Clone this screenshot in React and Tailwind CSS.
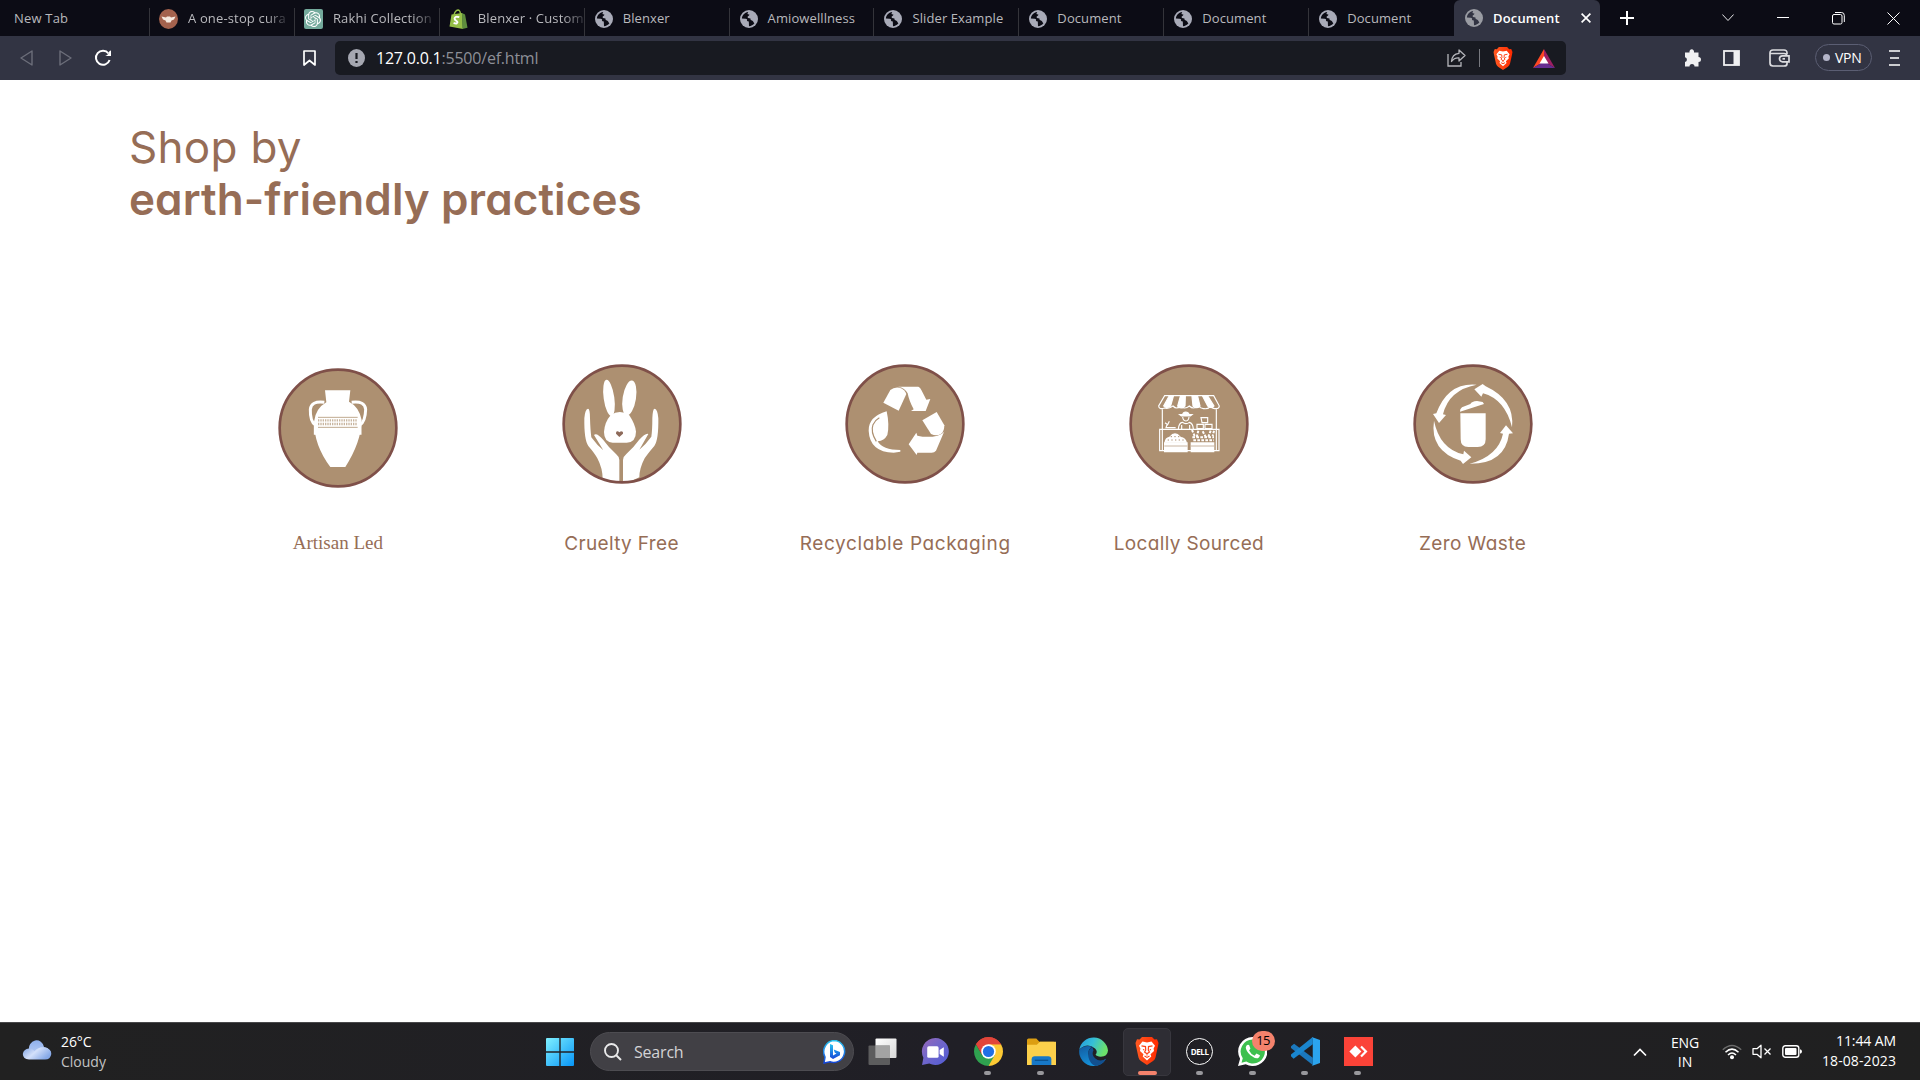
import React from "react";
import { SiOpenai } from "react-icons/si";

const Globe = ({ dim }) => (
  <svg className="h-[18px] w-[18px] shrink-0" viewBox="0 0 18 18">
    <circle cx="9" cy="9" r="9" fill={dim ? "#9a9ca3" : "#a9abb8"} />
    <path
      d="M8.2 2C4.6 2.400 2 5.400 1.900 8.600L5.600 8.700C7.200 8.900 7.500 10 6.900 11L8.800 11.400L9 16.200C11.200 16 13 15 14.400 13.200C13.600 12.600 13.300 11.400 12.400 10.700C10.700 10.400 10.200 9.700 10.500 8.600L8 8C7.300 7.300 7.600 6.400 8.500 6.100L9.600 4.700L7.400 3.900Z"
      fill={dim ? "#323443" : "#0c0c15"}
    />
    <path d="M10.500 2.300L11.800 4.300L10.800 6.600L12.200 7.700L15.900 7.800C15.500 5.200 13.500 2.900 10.500 2.300Z" fill={dim ? "#9a9ca3" : "#a9abb8"} />
  </svg>
);

const LionShield = ({ className, id }) => (
  <svg className={className} viewBox="0 0 24 28">
    <defs>
      <linearGradient id={id} x1="0" x2="1">
        <stop offset="0" stopColor="#ff5a22" />
        <stop offset="1" stopColor="#ff2a00" />
      </linearGradient>
    </defs>
    <path d="M7 0H17L19.500 2.600L22 2.300L23.500 6L23 9L20.500 20.500Q20 22.500 18 24L12 28L6 24Q4 22.500 3.500 20.500L1 9L.5 6L2 2.300L4.500 2.600Z" fill={`url(#${id})`} />
    <path d="M7.500 4.500L12 5.500L16.500 4.500L20 8.700L18.600 11.500L19 14L15.500 17.300L16.300 19.500L12 23.500L7.700 19.500L8.500 17.300L5 14L5.400 11.500L4 8.700Z" fill="#fff" />
    <path d="M6.500 8.800L10.500 9.600L10.700 13L9.600 15L12 16.700L14.400 15L13.300 13L13.500 9.600L17.500 8.800M8 12.500L9.300 13M16 12.500L14.700 13M12 16.700V18.500M9.500 19L12 20.400L14.500 19" fill="none" stroke="#ff4418" strokeWidth="1.200" />
  </svg>
);

const TABS = [
  ["A one-stop cura", "one"],
  ["Rakhi Collection", "ai"],
  ["Blenxer · Custom", "shop"],
  ["Blenxer"],
  ["Amiowelllness"],
  ["Slider Example"],
  ["Document"],
  ["Document"],
  ["Document"],
];

function Favicon({ kind }) {
  if (kind === "one")
    return (
      <svg className="h-5 w-[19px] shrink-0" viewBox="0 0 19 20">
        <ellipse cx="9.500" cy="10" rx="9.500" ry="10" fill="#a4624d" />
        <path d="M2.500 7.500L7 8.500L8 7.500H11L12 8.500L16.500 7.500L15 10.500L12.500 11.500L11.500 13.500H7.500L6.500 11.500L4 10.500Z" fill="#f6e9df" />
      </svg>
    );
  if (kind === "ai")
    return (
      <div className="flex h-5 w-[19px] shrink-0 items-center justify-center rounded-[2px] bg-[#74aa9c] text-white">
        <SiOpenai size={16} />
      </div>
    );
  if (kind === "shop")
    return (
      <svg className="h-5 w-[19px] shrink-0" viewBox="0 0 19 20">
        <path d="M2.500 5.500L13 4L14 20L.5 17.500Z" fill="#95bf47" />
        <path d="M13 4L16 5.500L18.500 18.800L13.300 20Z" fill="#5e8e3e" />
        <path d="M5 6Q6 1.500 9 1Q11 1 11.500 5" fill="none" stroke="#95bf47" strokeWidth="1.300" />
        <path d="M10.300 8.200Q5.800 6.800 5.600 9.600Q5.700 11 7.500 12Q9.300 13.300 7.800 14.300Q6.800 14.800 4.600 13.800" fill="none" stroke="#fff" strokeWidth="1.900" />
      </svg>
    );
  return <Globe />;
}

function TabStrip() {
  return (
    <div className="flex h-9 bg-[#0c0c15] text-[13px] text-[#b9b9bd]">
      <div className="flex w-[150px] shrink-0 flex-col justify-end">
        <div className="flex h-7 items-center border-r border-[#34343a] pb-[7px] pl-[14px] tracking-[0.2px]">New Tab</div>
      </div>
      {TABS.map(([title, kind], i) => (
        <div key={i} className="flex w-[144.9px] shrink-0 flex-col justify-end">
          <div className={`flex h-7 items-center pb-[7px] ${kind ? "gap-[10px] pl-[9px]" : "gap-[10px] pl-[10px]"} ${i < 8 ? "border-r border-[#34343a]" : ""}`}>
            <Favicon kind={kind} />
            <span
              className={`whitespace-nowrap ${
                kind ? "tracking-[0.15px] [mask-image:linear-gradient(to_right,black_80%,#0003)]" : "tracking-[0.1px]"
              }`}
            >
              {title}
            </span>
          </div>
        </div>
      ))}
      <div className="flex w-[146px] shrink-0 items-center rounded-t-md bg-[#323443] pl-[11px] font-semibold text-white">
        <Globe dim />
        <span className="ml-[9px] w-[89px] pl-px pt-px tracking-[0.15px]">Document</span>
        <svg className="h-[10px] w-[10px]" viewBox="0 0 10 10" stroke="#fff" strokeWidth="1.700">
          <path d="M.6.6L9.400 9.400M9.400.6L.6 9.400" />
        </svg>
      </div>
      <div className="flex flex-1 items-center">
        <svg className="ml-[20px] h-[14px] w-[14px]" viewBox="0 0 14 14" stroke="#fff" strokeWidth="2">
          <path d="M7 0V14M0 7H14" />
        </svg>
        <svg className="ml-[88px] h-[14px] w-[12px]" viewBox="0 0 12 14" stroke="#e8e8ea" fill="none">
          <path d="M.4 3.500L6 9.500L11.600 3.500" />
        </svg>
        <svg className="ml-[43px] h-[14px] w-[12px]" viewBox="0 0 12 14" stroke="#fff">
          <path d="M0 6.500H12" />
        </svg>
        <svg className="ml-[43px] h-[13px] w-[13px]" viewBox="0 0 13 13" stroke="#fff" fill="none">
          <rect x=".5" y="2.500" width="9.500" height="9.500" rx="1.500" />
          <path d="M3 .5H9.500Q12.300.5 12.300 3.500V10" />
        </svg>
        <svg className="ml-[42px] h-[13px] w-[13px]" viewBox="0 0 13 13" stroke="#fff">
          <path d="M.5.5L12.500 12.500M12.500.5L.5 12.500" />
        </svg>
      </div>
    </div>
  );
}

function Toolbar() {
  return (
    <div className="flex h-11 items-center bg-[#323443] pb-1">
      <svg className="ml-5 mt-1 h-4 w-[13px]" viewBox="0 0 13 16" fill="none" stroke="#6c6e7a" strokeWidth="1.400" strokeLinejoin="round">
        <path d="M12 1V15L1 8Z" />
      </svg>
      <svg className="ml-[26px] mt-1 h-4 w-[13px]" viewBox="0 0 13 16" fill="none" stroke="#6c6e7a" strokeWidth="1.400" strokeLinejoin="round">
        <path d="M1 1V15L12 8Z" />
      </svg>
      <svg className="ml-[22px] mt-1 h-[18px] w-[18px]" viewBox="0 0 18 18" fill="none" stroke="#fff" strokeWidth="2">
        <path d="M14.500 4.500A7 7 0 1 0 15.600 11" />
        <path d="M17 1.500V7H11.200Q14.500 6 15.500 2Z" fill="#fff" stroke="none" />
      </svg>
      <svg className="ml-[191px] mt-1 h-4 w-[13px]" viewBox="0 0 13 16" fill="none" stroke="#fff" strokeWidth="1.700" strokeLinejoin="round">
        <path d="M1 1H12V15L6.500 10.500L1 15Z" />
      </svg>
      <div className="ml-[19px] mt-1 flex h-[34px] w-[1231px] items-center rounded-[5px] bg-[#181a21] pl-[13px]">
        <svg className="h-[18px] w-[17px]" viewBox="0 0 17 18">
          <ellipse cx="8.500" cy="9" rx="8.500" ry="9" fill="#a5a7b1" />
          <path d="M8.500 4V10M8.500 12V14" stroke="#181a21" strokeWidth="2.200" />
        </svg>
        <span className="ml-[11px] w-[1071px] text-base tracking-[-0.22px] text-[#8d8f97]">
          <span className="text-white">127.0.0.1</span>:5500/ef.html
        </span>
        <svg className="h-[18px] w-[19px]" viewBox="0 0 19 18" fill="none" stroke="#b4b5ba" strokeWidth="1.300">
          <path d="M1 5V17H14V13" />
          <path d="M12 1L18 6.500L12 12V8.800Q7 8.500 4.500 12.500Q5 5 12 4.300Z" strokeLinejoin="round" />
        </svg>
        <div className="ml-[13px] h-[18px] w-px bg-[#77797f]" />
        <LionShield className="ml-[13px] h-[23px] w-5" id="shieldSmall" />
        <svg className="ml-[20px] h-[19px] w-[22px]" viewBox="0 0 22 19">
          <path d="M11 0L0 19L11 12.500Z" fill="#ff4724" />
          <path d="M11 0L22 19L11 12.500Z" fill="#9e1f63" />
          <path d="M0 19H22L11 12.500Z" fill="#662d91" />
          <path d="M11 7L15.500 14.500H6.500Z" fill="#fff" />
        </svg>
      </div>
      <svg className="ml-[118px] mt-1 h-[18px] w-[18px]" viewBox="0 0 18 18" fill="#f0f0f2">
        <path d="M1 3.500H5.500A2.300 2.600 0 1 1 10 3.500H14.500V8A2.300 2.300 0 1 1 14.500 13V17.500H10.500A2.500 2.500 0 0 0 5.500 17.500H1V13A2.400 2.400 0 0 0 1 8.300Z" />
      </svg>
      <svg className="ml-[21px] mt-1 h-4 w-[17px]" viewBox="0 0 17 16">
        <rect x="1" y="1" width="15" height="14" fill="none" stroke="#f0f0f2" strokeWidth="1.800" />
        <path d="M10.500 1H16V15H10.500Z" fill="#f0f0f2" />
      </svg>
      <svg className="ml-[29px] mt-1 h-[18px] w-[21px]" viewBox="0 0 21 18" fill="none" stroke="#dcdce0" strokeWidth="1.700">
        <path d="M18 5V4Q18 1 15 1H4Q1 1 1 4V14Q1 17 4 17H15Q18 17 18 15V13M1 4.500H15Q18 4.500 18 7" />
        <path d="M20 6.800H13.500A3 3 0 0 0 13.500 12.800H20Z" />
        <path d="M13.500 9.800H16" />
      </svg>
      <div className="ml-[25px] mt-[2px] flex h-[27px] w-[57px] items-center gap-[5px] rounded-full border border-[#5b5e73] pl-[7px] text-[14px] text-white">
        <i className="h-[7px] w-[7px] rounded-full bg-[#b4b5c9]" />
        <span className="tracking-[-0.3px]">VPN</span>
      </div>
      <svg className="ml-[17px] mt-1 h-4 w-[11px]" viewBox="0 0 11 16" stroke="#fff" strokeWidth="1.600">
        <path d="M0 1H11M1 8H10M0 15H11" />
      </svg>
    </div>
  );
}

const RIM = "#7f5049";
const TAN = "#ad9071";

const Vase = () => (
  <g fill="#fff">
    <path d="M196 121H272L268 155Q298 170 306 210Q305 275 257 351H212Q163 285 163 215Q168 175 200 157Z" />
    <path d="M194 157Q154 152 152 178Q151 215 167 225V254M276 157Q316 152 318 178Q317 215 301 225V254" fill="none" stroke="#fff" strokeWidth="9" />
    <path d="M175 202H294M175 232H294" stroke="#c0aa90" strokeWidth="3" />
    <path d="M175 211H294M175 222H294" stroke="#c8b59f" strokeWidth="7" strokeDasharray="4 3" />
  </g>
);

const Rabbit = () => (
  <g fill="#fff">
    <ellipse cx="1047" cy="144" rx="16" ry="55" transform="rotate(-8 1047 144)" />
    <ellipse cx="1108" cy="144" rx="20" ry="53" transform="rotate(9 1108 144)" />
    <path d="M1052 196Q1079 176 1108 196Q1126 224 1128 245Q1128 277 1100 278H1058Q1032 276 1032 246Q1034 216 1052 196Z" />
    <path d="M1078 261L1068 251Q1067 243 1074 244L1078 247L1083 244Q1090 244 1089 251Z" fill="#8d6a5a" />
    <path d="M984 176Q975 178 973 205Q972 270 985 288Q1004 310 1012 325Q1028 355 1028 388L1052 395L1078 396V330Q1078 320 1068 312Q1044 290 1030 270Q1010 247 1002 255L1030 301Q1012 287 994 262Q991 240 990 205Q990 176 984 176Z" />
    <path d="M1184 176Q1193 178 1195 205Q1196 270 1183 288Q1164 310 1154 325Q1138 355 1138 382L1115 392L1089 396V330Q1089 320 1099 312Q1123 290 1137 270Q1158 247 1165 252L1138 299Q1156 285 1174 260Q1177 240 1177 205Q1178 176 1184 176Z" />
  </g>
);

const Recycle = () => (
  <g fill="#fff">
    <path d="M311 158L332 120Q343 110 360 113Q376 118 380 132L357 182Z" />
    <path d="M355 110H416Q422 112 425 120L440 149L452 147L438 183H394L402 178Q388 152 384 130Q376 113 355 110Z" />
    <path d="M428 211L471 186L494 226Q494 244 484 252Q470 260 454 252Z" />
    <path d="M494 244L469 302Q464 308 456 308H413L411 315L387 283L410 248L413 257Q445 264 473 257Q490 252 494 244Z" />
    <path d="M321 184Q266 200 267 242Q270 306 342 308L362 305V300Q308 300 294 274Q314 272 323 255Q330 225 321 184Z" />
    <path d="M290 274Q272 246 280 224Q286 210 299 203" fill="none" stroke={TAN} strokeWidth="3.500" />
  </g>
);

const Market = () => (
  <g fill="none" stroke="#fff" strokeWidth="3.500">
    <path d="M1154 137H1301L1318 168Q1317 177 1306 176Q1297 177 1293 168Q1284 178 1272 176Q1262 177 1256 168Q1240 180 1228 168Q1214 180 1201 168Q1190 180 1179 168Q1165 178 1154 174Q1137 180 1136 168Z" />
    <path d="M1167 139L1151 168Q1158 177 1172 168L1180 139ZM1201 139L1193 168Q1205 180 1215 168L1216 139ZM1236 139L1239 168Q1250 178 1260 168L1253 139ZM1268 139L1283 168Q1295 178 1302 168L1284 139Z" fill="#fff" />
    <path d="M1147 178V238M1309 178V238M1139 238H1317V302H1139ZM1147 240V300M1309 240V300" />
    <path d="M1199 194H1236L1231 198H1204ZM1208 193Q1210 186 1217 186Q1225 186 1227 193Z" fill="#fff" />
    <path d="M1208 201Q1209 212 1218 213Q1226 212 1227 201M1195 237Q1197 218 1207 217Q1218 225 1228 217Q1239 220 1240 237M1205 225V237M1229 225V237" />
    <path d="M1155 218L1163 224L1168 214M1162 222L1158 233H1187M1263 203H1283V218H1266ZM1251 223H1270V236H1251ZM1275 223H1296V236H1275Z" />
    <path d="M1236 240L1244 258M1255 242L1250 262M1268 244L1278 262M1292 242L1284 264M1302 242L1298 258M1237 262H1302M1240 271H1302" strokeDasharray="8 4" strokeWidth="6" />
    <path d="M1153 278Q1155 262 1168 260Q1185 240 1202 260Q1218 263 1221 278Z" fill="#fff" stroke="none" />
    <path d="M1163 270H1215M1172 260H1206" stroke={TAN} strokeWidth="3" strokeDasharray="4 7" />
    <path d="M1152 277H1223V307H1152ZM1232 277H1303V307H1232Z" fill="#fff" stroke="none" />
    <path d="M1153 288H1222M1233 288H1302" stroke={TAN} strokeWidth="2" />
  </g>
);

const Bin = () => (
  <g fill="#fff">
    <path d="M242 190H318V268Q318 291 294 291H266Q243 291 243 268Z" />
    <path d="M241 185Q240 177 247 172L272 162Q276 154 292 153L309 156L313 162Z" />
    <path d="M291 104Q205 96 170 190L160 192L178 219L199 195L190 193Q207 120 291 104Z" />
    <path d="M397 232Q406 150 318 109L309 102L284 118L305 140L310 130Q376 148 397 232Z" />
    <path d="M270 341Q376 342 388 251L400 250L379 226L361 249L370 251Q356 318 270 341Z" />
    <path d="M163 212Q150 302 243 332L250 342L275 322L253 302L251 313Q180 296 163 212Z" />
  </g>
);

const PRACTICES = [
  { label: "Artisan Led", box: "55 54 360 360", art: Vase, circle: "mt-1", text: "mt-[41px] font-['Liberation_Serif']" },
  { label: "Cruelty Free", box: "906 42 360 360", art: Rabbit, circle: "mb-1", text: "mt-[42px] tracking-[0.35px]" },
  { label: "Recyclable Packaging", box: "196 42 360 360", art: Recycle, circle: "mb-1", text: "mt-[42px] tracking-[0.6px]" },
  { label: "Locally Sourced", box: "1047 42 360 360", art: Market, circle: "mb-1", text: "mt-[42px] tracking-[0.35px]" },
  { label: "Zero Waste", box: "100 42 360 360", art: Bin, circle: "mb-1", text: "mt-[42px] tracking-[0.4px]" },
];

function Page() {
  return (
    <main className="h-[942px] bg-white pl-[129px] pt-[41px] font-['Inter',sans-serif] text-[#966d56] [font-feature-settings:'cv11']">
      <h1 className="text-[44px] leading-[52px]">
        <span className="block font-normal tracking-[0.3px]">Shop by</span>
        <span className="block font-semibold tracking-[0.1px]">earth-friendly practices</span>
      </h1>
      <div className="ml-[67px] mt-[139px] flex w-[1419px]">
        {PRACTICES.map(({ label, box, art: Art, circle, text }) => {
          const [x, y] = box.split(" ").map(Number);
          return (
            <div key={label} className="flex w-[283.7px] shrink-0 flex-col items-center">
              <svg className={`h-[120px] w-[120px] ${circle}`} viewBox={box}>
                <circle cx={x + 180} cy={y + 180} r="175" fill={TAN} />
                <Art />
                <circle cx={x + 180} cy={y + 180} r="175" fill="none" stroke={RIM} strokeWidth="8" />
              </svg>
              <p className={`whitespace-nowrap text-[19px] leading-7 ${text}`}>{label}</p>
            </div>
          );
        })}
      </div>
    </main>
  );
}

const AppIcon = ({ children }) => (
  <svg className="h-[29px] w-[29px]" viewBox="0 0 28 28">
    {children}
  </svg>
);

function Slot({ children, running, active }) {
  return (
    <div className={`relative mx-[2.450px] flex h-12 w-12 items-center justify-center rounded-[5px] ${active ? "border border-[#38373e] bg-[#2e2d34]" : ""}`}>
      {children}
      {running && <i className="absolute bottom-[1px] left-[20px] h-1 w-[7px] rounded-full bg-[#98989c]" />}
      {active && <i className="absolute bottom-0 left-[14px] h-1 w-[19px] rounded-full bg-[#f4826c]" />}
    </div>
  );
}

function Taskbar() {
  return (
    <footer className="flex h-[58px] items-center border-t border-[#48484a] bg-linear-to-r from-[#212121] via-[#201f26] to-[#202020] text-white">
      <svg className="ml-[22px] mb-1 h-5 w-[30px]" viewBox="0 0 30 20">
        <defs>
          <linearGradient id="cloudBack" x2="0" y2="1">
            <stop stopColor="#8fb0ec" />
            <stop offset="1" stopColor="#c3d4f6" />
          </linearGradient>
          <linearGradient id="cloudFront" x2="1" y2=".5">
            <stop stopColor="#7ea2e2" />
            <stop offset=".5" stopColor="#d3e0fa" />
            <stop offset="1" stopColor="#86a9e8" />
          </linearGradient>
        </defs>
        <path d="M7 10A7.500 8 0 0 1 22 7A6.500 6.300 0 0 1 24 19H12Z" fill="url(#cloudBack)" />
        <path d="M7 8.500Q10.500 8.500 12.500 11Q17 6.500 22.500 7.500Q29.500 8.500 29.300 14Q28.500 19.500 23 19.600H7Q1 19 .8 14Q1.500 9 7 8.500Z" fill="url(#cloudFront)" />
      </svg>
      <div className="ml-[9px] w-[485px] text-[14px] leading-5">
        <div className="tracking-[-0.1px]">26°C</div>
        <div className="text-[#c3c3c3]">Cloudy</div>
      </div>
      <svg className="h-7 w-7" viewBox="0 0 28 28">
        <defs>
          <linearGradient id="win" x2="1" y2="1">
            <stop stopColor="#7ff0ff" />
            <stop offset="1" stopColor="#0795f7" />
          </linearGradient>
        </defs>
        <path d="M0 1Q0 0 1 0H13.300V13.300H0ZM14.700 0H27Q28 0 28 1V13.300H14.700ZM0 14.700H13.300V28H1Q0 28 0 27ZM14.700 14.700H28V27Q28 28 27 28H14.700Z" fill="url(#win)" />
      </svg>
      <div className="ml-4 flex h-[39px] w-[264px] items-center rounded-full border border-[#4d4c51] bg-[#414045] pl-[13px]">
        <svg className="h-[18px] w-[18px]" viewBox="0 0 18 18" fill="none" stroke="#e9e9ea" strokeWidth="1.900">
          <circle cx="7.500" cy="7.500" r="6.500" />
          <path d="M12 12L17 17" />
        </svg>
        <span className="ml-[12px] w-[189px] text-base tracking-[-0.2px] text-[#d3d3d5]">Search</span>
        <svg className="h-6 w-6" viewBox="0 0 24 24">
          <defs>
            <linearGradient id="bing" x2="0" y2="1">
              <stop stopColor="#27c3f0" />
              <stop offset="1" stopColor="#1546d8" />
            </linearGradient>
          </defs>
          <path d="M12 .5A11 11 0 1 1 7 21.800L1 23L2 17A11.300 11.300 0 0 1 12 .5Z" fill="#fff" stroke="url(#bing)" strokeWidth="1.500" />
          <path d="M7 4L10 5.200V15.500L13.500 13.600L11.800 12.800L10.700 9.500L17 12V15.300L10 19L7 17Z" fill="url(#bing)" />
        </svg>
      </div>
      <div className="ml-[2px] flex w-[529px] items-center">
        <Slot>
          <svg className="h-7 w-[29px]" viewBox="0 0 29 28">
            <defs>
              <linearGradient id="tv" x2="1" y2="1">
                <stop stopColor="#fff" />
                <stop offset="1" stopColor="#d8d8d8" />
              </linearGradient>
            </defs>
            <rect x="7.500" y=".5" width="21" height="19.500" rx="1" fill="url(#tv)" />
            <rect x=".5" y="7.500" width="21.500" height="19.500" rx="1" fill="#6c6c6c" opacity=".8" />
            <path d="M7.500 7.500H22V20H7.500Z" fill="#a3a3a3" />
          </svg>
        </Slot>
        <Slot>
          <AppIcon>
            <defs>
              <linearGradient id="chat" x2="1" y2="1">
                <stop stopColor="#9a68b8" />
                <stop offset=".4" stopColor="#7467c9" />
                <stop offset="1" stopColor="#4f5bd5" />
              </linearGradient>
            </defs>
            <path d="M14 1A13 13 0 1 1 8 25.600L1 27L2.300 20A13 13 0 0 1 14 1Z" fill="url(#chat)" />
            <rect x="6" y="9" width="11" height="11" rx="1.500" fill="#fff" />
            <path d="M18 12.500L22 10V19L18 16.500Z" fill="#fff" />
          </AppIcon>
        </Slot>
        <Slot running>
          <AppIcon>
            <path d="M14 14L1.880 7A14 14 0 0 1 26.120 7Z" fill="#e1453a" />
            <path d="M14 14V28A14 14 0 0 0 26.120 7H14Z" fill="#fcc934" />
            <path d="M14 14L20 17.500L14 28A14 14 0 0 1 1.880 7L8 17.500Z" fill="#2fa14f" />
            <path d="M14 7H26.120A14 14 0 0 0 1.880 7L8 17.500Z" fill="#e1453a" />
            <circle cx="14" cy="14" r="7" fill="#fff" />
            <circle cx="14" cy="14" r="5.400" fill="#1f6fe5" />
          </AppIcon>
        </Slot>
        <Slot running>
          <AppIcon>
            <path d="M0 3Q0 1.500 1.500 1.500H9L12 4.500H26V12H0Z" fill="#dc9e12" />
            <path d="M0 7.500H9.500L12.500 4.500H28V27H0Z" fill="#fcd04b" />
            <path d="M4.500 27V21.500Q4.500 18.500 7.500 18.500H20.500Q23.500 18.500 23.500 21.500V27Z" fill="#1778c8" />
            <path d="M7.500 22.500H20.500" stroke="#0c5492" strokeWidth="1.300" />
          </AppIcon>
        </Slot>
        <Slot>
          <AppIcon>
            <defs>
              <linearGradient id="edgeTop" x2="1" y2=".3">
                <stop stopColor="#2399dc" />
                <stop offset=".5" stopColor="#35bfd8" />
                <stop offset="1" stopColor="#6be16b" />
              </linearGradient>
              <linearGradient id="edgeLow" x2=".5" y2="1">
                <stop stopColor="#135a9f" />
                <stop offset="1" stopColor="#1595dd" />
              </linearGradient>
            </defs>
            <path d="M.3 12A14 14 0 0 1 28 13Q27.500 19 21 19Q17 19 16 17Q18.500 14 15.500 11Q8 5 .3 12Z" fill="url(#edgeTop)" />
            <path d="M.3 12Q6 7 13 9.500Q9 11 9 16Q10 24 18 24Q23 24 26 21Q22 28 14 28A14 14 0 0 1 .3 12Z" fill="url(#edgeLow)" />
            <path d="M13 9.700Q8 12 9 19Q10.500 26 16 27.900Q22.500 27.500 26.300 21Q20 24.500 15.500 20.500Q11.500 17 14 12.800Z" fill="#12508f" />
          </AppIcon>
        </Slot>
        <Slot active>
          <LionShield className="mb-px h-7 w-6" id="shieldLarge" />
        </Slot>
        <Slot running>
          <div className="flex h-[27px] w-[27px] items-center justify-center rounded-full border-[1.500px] border-white text-[8px] font-bold leading-none tracking-[-0.4px]">
            DELL
          </div>
        </Slot>
        <Slot running>
          <AppIcon>
            <path d="M14 0A14 14 0 1 1 7.500 26.200L0 28L2 21A14 14 0 0 1 14 0Z" fill="#fff" />
            <path d="M14 2.400A11.600 11.600 0 1 1 8 23.700L3.400 24.800L4.600 20.500A11.600 11.600 0 0 1 14 2.400Z" fill="#3dc04e" />
            <path d="M9.500 7.500Q8 7.500 7.500 10Q7.500 13.500 12 17.700Q16.500 21.200 19.200 20.500Q21 19.800 21.200 17.700L17.800 16L16 18Q12.500 16.800 10.700 13L12 11L10.700 7.700Z" fill="#fff" />
          </AppIcon>
          <span className="absolute top-[3px] left-[23px] flex h-[20px] w-[23px] items-center justify-center rounded-full bg-[#f4826c] text-[13px] tracking-[-0.5px] text-black">15</span>
        </Slot>
        <Slot running>
          <AppIcon>
            <path d="M0 9L3 6.500L21 20V27L0 10.500Z" fill="#1b78bd" />
            <path d="M0 18.500L2.500 21L21 7V0L0 17Z" fill="#1a86cf" />
            <path d="M20 0L28 3V25L20 28Q21 27.500 21 26V2Q21 .5 20 0Z" fill="#2ba4ee" />
          </AppIcon>
        </Slot>
        <Slot running>
          <AppIcon>
            <path d="M0 0H28V28H0Z" fill="#fb4338" />
            <path d="M11 8.200L16.800 14L11 19.800L5.200 14Z" fill="#fff" />
            <path d="M15.700 10L17.200 8.500L22.700 14L17.200 19.500L15.700 18L19.700 14Z" fill="#fff" />
          </AppIcon>
        </Slot>
      </div>
      <svg className="ml-[248px] h-[10px] w-[14px]" viewBox="0 0 14 10" fill="none" stroke="#fff" strokeWidth="1.700">
        <path d="M1 8.500L7 2.500L13 8.500" />
      </svg>
      <div className="ml-[20px] w-[36px] text-center text-[14px] leading-[19px]">
        <div className="tracking-[-0.1px]">ENG</div>
        <div>IN</div>
      </div>
      <svg className="ml-[19px] h-4 w-5" viewBox="0 0 20 16" fill="none" stroke="#fff" strokeWidth="1.500">
        <path d="M.8 5.800Q10-2.800 19.200 5.800" stroke="#6b6b6b" />
        <path d="M3.500 8.300Q10 2 16.500 8.300M6 11Q10 7 14 11" />
        <circle cx="10" cy="13.300" r="2" fill="#fff" stroke="none" />
      </svg>
      <svg className="ml-[10px] h-[15px] w-5" viewBox="0 0 20 15" fill="none" stroke="#fff" strokeWidth="1.300">
        <path d="M9 1.200V13.800L5 10.300H1V4.700H5Z" strokeLinejoin="round" />
        <path d="M12.500 4.500L18.500 10.500M18.500 4.500L12.500 10.500" />
      </svg>
      <svg className="ml-[10px] h-[13px] w-5" viewBox="0 0 20 13">
        <rect x=".8" y=".8" width="16" height="11.400" rx="2.500" fill="none" stroke="#fff" strokeWidth="1.400" />
        <rect x="3" y="3" width="11.500" height="7" rx="1" fill="#fff" />
        <path d="M18 4.200Q20 4.500 20 6.500Q20 8.500 18 8.800Z" fill="#fff" />
      </svg>
      <div className="mb-[2px] mr-6 flex-1 text-right text-[14px] leading-5">
        <div className="tracking-[-0.1px]">11:44 AM</div>
        <div className="tracking-[0.1px]">18-08-2023</div>
      </div>
    </footer>
  );
}

export default function App() {
  return (
    <div className="h-[1080px] w-[1920px] overflow-hidden bg-white font-['Open_Sans','Noto_Sans',sans-serif]">
      <TabStrip />
      <Toolbar />
      <Page />
      <Taskbar />
    </div>
  );
}
